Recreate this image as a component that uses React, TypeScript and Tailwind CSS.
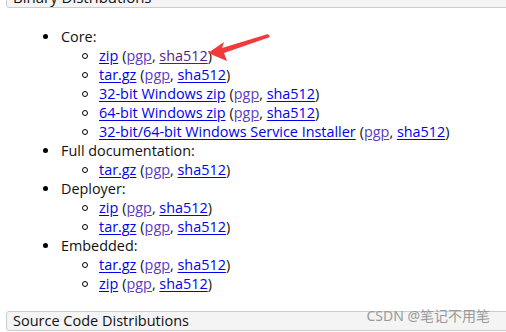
const font = { fontFamily: '"Open Sans", "Noto Sans", sans-serif' };

function Row({ main, sigVisited }: { main: string; sigVisited?: boolean }) {
  return (
    <li className="flex items-center h-[19px]">
      <span className="w-[6px] h-[6px] rounded-full border border-black mr-[11px] ml-[-1px]" />
      <a className="text-[#0000ee] underline underline-offset-2">{main}</a>
      <span className="ml-1">(</span>
      <a className="text-[#5a3cc0] underline underline-offset-2">pgp</a>
      <span>,&nbsp;</span>
      <a
        className={
          sigVisited
            ? "text-[#551a8b] underline underline-offset-2"
            : "text-[#0000ee] underline underline-offset-2"
        }
      >
        sha512
      </a>
      <span>)</span>
    </li>
  );
}

function Group({ title, rows }: { title: string; rows: { main: string; sigVisited?: boolean }[] }) {
  return (
    <li>
      <div className="flex items-center h-[19px]">
        <span className="w-[5px] h-[5px] rounded-full bg-black mr-[13px]" />
        <span>{title}</span>
      </div>
      <ul className="pl-[40px]">
        {rows.map((r, i) => (
          <Row key={i} main={r.main} sigVisited={r.sigVisited} />
        ))}
      </ul>
    </li>
  );
}

export default function App() {
  const groups = [
    {
      title: "Core:",
      rows: [
        { main: "zip", sigVisited: true },
        { main: "tar.gz" },
        { main: "32-bit Windows zip" },
        { main: "64-bit Windows zip" },
        { main: "32-bit/64-bit Windows Service Installer" },
      ],
    },
    { title: "Full documentation:", rows: [{ main: "tar.gz" }] },
    { title: "Deployer:", rows: [{ main: "zip" }, { main: "tar.gz" }] },
    { title: "Embedded:", rows: [{ main: "tar.gz" }, { main: "zip" }] },
  ];

  return (
    <div
      className="relative w-[506px] h-[332px] overflow-hidden bg-white text-[14.4px] text-[#111]"
      style={font}
    >
      <div className="ml-[6px] mr-[-40px] mt-[-13px] h-[21px] border border-[#cccccc] rounded-l-[3px] bg-[#f4f4f4] pl-[6px] flex items-center text-[15px] text-[#111] leading-none">
        Binary Distributions
      </div>

      <ul className="pl-[43px] pt-[19px]">
        {groups.map((g, i) => (
          <Group key={i} title={g.title} rows={g.rows} />
        ))}
      </ul>

      <div className="ml-[6px] mr-[-40px] mt-[18px] h-[20px] border border-[#cccccc] rounded-l-[3px] bg-[#f4f4f4] pl-[6px] flex items-center text-[14.5px] font-medium text-[#111] leading-none">
        Source Code Distributions
      </div>

      <div
        className="absolute right-[16px] top-[305px] text-[14px] text-[#9a9a9a]"
        style={{ fontFamily: '"Noto Sans", "Noto Sans CJK SC", sans-serif' }}
      >
        CSDN @笔记不用笔
      </div>

      <svg className="absolute left-0 top-0" width="506" height="332">
        <polygon
          points="208,53 224,42 222,48 268,34 270,37 224,53 227,61"
          fill="#f23a3a"
        />
      </svg>
    </div>
  );
}
